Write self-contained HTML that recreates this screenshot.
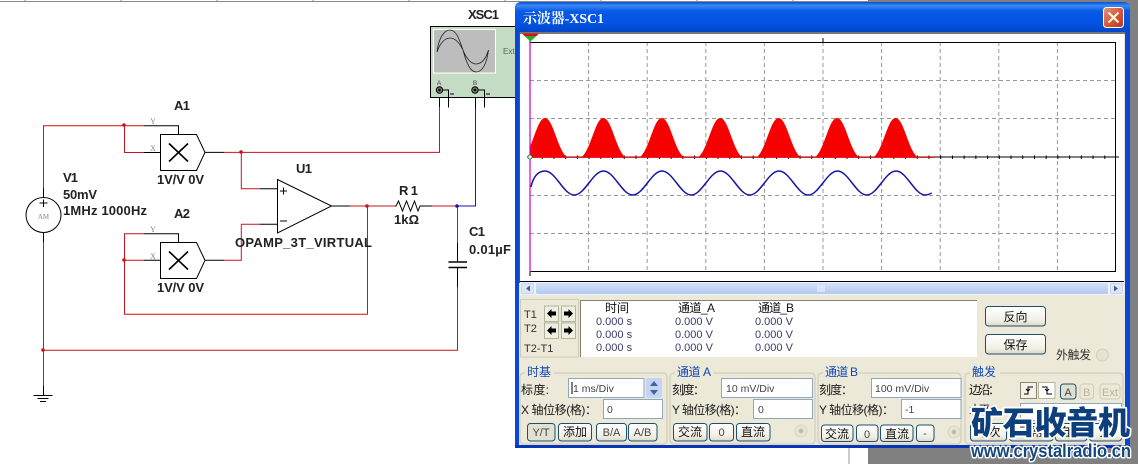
<!DOCTYPE html>
<html lang="zh">
<head>
<meta charset="utf-8">
<title>示波器-XSC1</title>
<style>
html,body{margin:0;padding:0;background:#fff;width:1138px;height:464px;overflow:hidden}
svg{display:block;position:absolute;left:0;top:0}
text{font-family:"Liberation Sans","Noto Sans CJK SC",sans-serif}
.l{font-size:13px;font-weight:bold;fill:#222}
.cj{font-size:12px;fill:#1a1a1a}
.gl{font-size:12px;fill:#1248b8}
.v{font-size:11px;fill:#3a3a6a}
.i{font-size:10.5px;fill:#444}
.h{font-size:12px;fill:#111}
.r{stroke:#c8141c;fill:none;stroke-width:1}
.k{stroke:#000;fill:none;stroke-width:1}
.btn{fill:url(#bt);stroke:#1f4f6f;stroke-width:1}
.inp{fill:#fff;stroke:#8fa6bc;stroke-width:1}
.grp{fill:none;stroke:#d5d2bf;stroke-width:1.5}
.gd{stroke:#999;stroke-width:1;stroke-dasharray:4 3;fill:none}
</style>
</head>
<body>
<svg width="1138" height="464" viewBox="0 0 1138 464" xmlns="http://www.w3.org/2000/svg">
<defs>
<linearGradient id="tb" x1="0" y1="0" x2="0" y2="1">
<stop offset="0" stop-color="#0a4fd0"/><stop offset=".12" stop-color="#3a8af5"/><stop offset=".3" stop-color="#0a5ae6"/><stop offset=".7" stop-color="#0353e4"/><stop offset="1" stop-color="#0347c8"/>
</linearGradient>
<linearGradient id="bt" x1="0" y1="0" x2="0" y2="1"><stop offset="0" stop-color="#fff"/><stop offset=".7" stop-color="#f2f0e6"/><stop offset="1" stop-color="#dcd9c8"/></linearGradient>
<linearGradient id="sb" x1="0" y1="0" x2="0" y2="1"><stop offset="0" stop-color="#d2e0fa"/><stop offset="1" stop-color="#b4caf2"/></linearGradient>
<linearGradient id="cl" x1="0" y1="0" x2="1" y2="1"><stop offset="0" stop-color="#e9967c"/><stop offset=".5" stop-color="#d9583a"/><stop offset="1" stop-color="#b8371c"/></linearGradient>
<clipPath id="pc"><rect x="530" y="42" width="585" height="230"/></clipPath>
</defs>

<rect width="1138" height="464" fill="#fff"/>
<!-- top ruler strip -->
<path d="M0 1.5H868" stroke="#8a8a8a" fill="none"/>
<path d="M25 0V2M121 0V2M217 0V2M313 0V2M409 0V2M505 0V2M601 0V2M697 0V2M793 0V2" stroke="#8a8a8a"/>
<!-- gray background right -->
<rect x="868" y="0" width="270" height="464" fill="#808080"/>
<path d="M849 448V464" stroke="#999"/>

<!-- schematic wires -->
<path class="r" d="M43.5 188V125.7H144M124.5 125.7V152.5H144M43.5 242V386M43.5 350.3H457.5V287M457.5 206V243"/>
<path class="k" d="M144 125.7H178.5V134M144 152.5H160.5M43.5 386V395M33.5 395.5H52.5M37.5 398.5H48.5M40 401.5H46M43.5 188V198M43.5 232V242"/>
<circle cx="43.5" cy="215" r="17.5" fill="#fff" stroke="#000"/>
<path d="M39.5 203H47.5M43.5 199.5V207" stroke="#000" fill="none"/>
<text x="43.5" y="219" text-anchor="middle" style="font-family:'Liberation Serif',serif;font-size:7px;fill:#888">AM</text>
<circle cx="124" cy="125" r="1.8" fill="#c8141c"/>
<text x="153" y="124" text-anchor="middle" style="font-family:'Liberation Serif',serif;font-size:8px;fill:#888">Y</text>
<text x="153" y="151" text-anchor="middle" style="font-family:'Liberation Serif',serif;font-size:8px;fill:#888">X</text>

<!-- A1 -->
<path class="k" d="M160.5 134.5H196.5L205 152.4L196.5 170.5H160.5Z" fill="#fff"/>
<path d="M169 143.5L188 161.5M188 143.5L169 161.5" stroke="#000" stroke-width="1.6" fill="none"/>
<path class="k" d="M205 152.4H224"/>
<path class="r" d="M224 152.4H439.5V107M241.3 152.4V188.7H260M241.3 224.3V260.3H224M241.3 224.3H260"/>
<path class="k" d="M439.5 107V90M260 188.7H277.5M260 224.3H277.5M205 260.3H224"/>
<circle cx="241" cy="152" r="1.8" fill="#c8141c"/>

<!-- A2 -->
<path class="r" d="M144 233.7H124.5V314.3H367.5V206M124.5 260.3H144"/>
<path class="k" d="M144 233.7H178.5V242M144 260.3H160.5"/>
<path class="k" d="M160.5 242.5H196.5L205 260.4L196.5 278.5H160.5Z" fill="#fff"/>
<path d="M169 251.5L188 269.5M188 251.5L169 269.5" stroke="#000" stroke-width="1.6" fill="none"/>
<circle cx="124" cy="260" r="1.8" fill="#c8141c"/>
<circle cx="43" cy="350" r="1.8" fill="#c8141c"/>
<text x="153" y="232" text-anchor="middle" style="font-family:'Liberation Serif',serif;font-size:8px;fill:#888">Y</text>
<text x="153" y="259" text-anchor="middle" style="font-family:'Liberation Serif',serif;font-size:8px;fill:#888">X</text>

<!-- opamp -->
<path class="k" d="M277.5 179.5L331.5 206L277.5 233Z" fill="#fff"/>
<path d="M280 191H287M283.5 187.5V194.5M280 221H287" stroke="#000" fill="none"/>
<path class="k" d="M331.5 206H350"/>
<path class="r" d="M350 206H395M432 206H457"/>
<circle cx="367" cy="206" r="1.8" fill="#c8141c"/>
<path class="k" d="M395 206H396L398.500 201L402.500 211L406.500 201L410.500 211L414.500 201L418 211L420 206H432"/>
<path d="M457 206H475.500V108" stroke="#1616a8" fill="none"/>
<path class="k" d="M475.500 108V90"/>
<circle cx="457" cy="206" r="1.800" fill="#1616a8"/>
<!-- capacitor -->
<path class="k" d="M457.500 243V261.500M457.500 267.500V287"/>
<path d="M448.500 262H467M448.500 267.500H467" stroke="#000" stroke-width="1.600" fill="none"/>

<!-- labels -->
<text class="l" x="468" y="19" textLength="31" lengthAdjust="spacing">XSC1</text>
<text class="l" x="174" y="110" textLength="16" lengthAdjust="spacing">A1</text>
<text class="l" x="63" y="182" textLength="15" lengthAdjust="spacing">V1</text>
<text class="l" x="63" y="199" textLength="34" lengthAdjust="spacing">50mV</text>
<text class="l" x="63" y="215" textLength="84" lengthAdjust="spacing">1MHz 1000Hz</text>
<text class="l" x="174" y="218" textLength="16" lengthAdjust="spacing">A2</text>
<text class="l" x="157" y="184" textLength="47" lengthAdjust="spacing">1V/V 0V</text>
<text class="l" x="157" y="292" textLength="47" lengthAdjust="spacing">1V/V 0V</text>
<text class="l" x="296" y="173" textLength="16" lengthAdjust="spacing">U1</text>
<text class="l" x="399" y="195" textLength="19" lengthAdjust="spacing">R1</text>
<text class="l" x="394" y="224" textLength="25" lengthAdjust="spacing">1kΩ</text>
<text class="l" x="469" y="236" textLength="16" lengthAdjust="spacing">C1</text>
<text class="l" x="469" y="254" textLength="42" lengthAdjust="spacing">0.01µF</text>
<text class="l" x="235" y="247" textLength="137" lengthAdjust="spacing">OPAMP_3T_VIRTUAL</text>

<!-- oscilloscope symbol -->
<rect x="430.500" y="26.500" width="90" height="71" fill="#c3dcc3" stroke="#000"/>
<rect x="433.500" y="29.500" width="62" height="43.500" fill="#bdbdbd" stroke="#fff"/>
<path d="M437 52C439 36 445 30 450 30C457 30 460 42 463 50C466 62 470 72 476 72C483 72 487 62 488.500 50M437 52C440 43 445 38 450 38C456 38 460 44 463 50C466 58 471 64 476 64C482 64 486 58 488.500 50" stroke="#222" stroke-width=".8" fill="none"/>
<text x="503" y="54" style="font-size:8px;fill:#556b55">Ext</text>
<text x="439" y="85" text-anchor="middle" style="font-size:6.500px;fill:#445">A</text>
<text x="475" y="85" text-anchor="middle" style="font-size:6.500px;fill:#445">B</text>
<circle cx="439.500" cy="90" r="3.200" fill="#777" stroke="#000"/>
<circle cx="475" cy="90" r="3.200" fill="#777" stroke="#000"/>
<circle cx="439.500" cy="90" r="1.200" fill="#000"/>
<circle cx="475" cy="90" r="1.200" fill="#000"/>
<path class="k" d="M442 90H448.500V107.500M478 90H484.500V107.500M450 94H454M486 94H490"/>

<!-- window frame -->
<path d="M515 448V8Q515 2 522 2H1122Q1130 2 1130 8V448Z" fill="#0a47d6"/>
<path d="M515 32V8Q515 2 522 2H1122Q1130 2 1130 8V32Z" fill="url(#tb)"/>
<rect x="515" y="445" width="615" height="3" fill="#0834b8"/>
<rect x="519" y="32" width="606" height="413" fill="#ece9d8"/>
<rect x="519" y="32" width="606" height="2" fill="#777"/>
<text x="523" y="23" textLength="81" lengthAdjust="spacing" style="font-family:'Liberation Serif','Noto Serif CJK SC',serif;font-size:14px;font-weight:bold;fill:#fff">示波器-XSC1</text>
<!-- close -->
<rect x="1103.500" y="7.500" width="20" height="20" rx="3" fill="url(#cl)" stroke="#fff"/>
<path d="M1108.500 12.500L1118.500 22.500M1118.500 12.500L1108.500 22.500" stroke="#fff6e0" stroke-width="2.200"/>

<!-- plot -->
<rect x="520" y="34" width="604" height="247" fill="#fff"/>
<path d="M519.500 32V283" stroke="#555"/>
<path d="M520 281.500H1124" stroke="#000"/>
<path class="gd" d="M588.600 42V271M647.200 42V271M705.800 42V271M764.400 42V271M823 42V271M881.600 42V271M940.200 42V271M998.800 42V271M1057.400 42V271M530 80.500H1115M530 118.500H1115M530 195.500H1115M530 233.500H1115"/>
<path d="M530 42.500H1115.500V271.500H530M823 38V42" stroke="#000" fill="none"/>
<path d="M527 157H1119" stroke="#000"/>
<path d="M530 157.200H1116" stroke="#000" stroke-width="3.500" stroke-dasharray="1 10.720" fill="none"/>
<g clip-path="url(#pc)">
<path d="M523.500 157C533 148 537 118 545 118C553 118 557 148 566.500 157ZM581.900 157C591.400 148 595.400 118 603.400 118C611.400 118 615.400 148 624.900 157ZM640.300 157C649.800 148 653.800 118 661.800 118C669.800 118 673.800 148 683.300 157ZM698.700 157C708.200 148 712.200 118 720.200 118C728.200 118 732.200 148 741.700 157ZM757.100 157C766.600 148 770.600 118 778.600 118C786.600 118 790.600 148 800.100 157ZM815.500 157C825 148 829 118 837 118C845 118 849 148 858.500 157ZM874.100 157C883.600 148 887.600 118 895.600 118C903.600 118 907.600 148 917.100 157Z" fill="#f60000"/>
<path d="M530 157.300H935" stroke="#e8000c" stroke-width="1.200"/>
</g>
<path d="M531 187C533 177 538 171 545 171c10.650 0 18.600 24 29.250 24s18.600-24 29.250-24s18.600 24 29.250 24s18.600-24 29.250-24s18.600 24 29.250 24s18.600-24 29.250-24s18.600 24 29.250 24s18.600-24 29.250-24s18.600 24 29.250 24s18.600-24 29.250-24s18.600 24 29.250 24s18.600-24 29.250-24s18.600 24 29.250 24c2.500 0 4.500-1 6.500-2" stroke="#1414a6" stroke-width="1.500" fill="none"/>
<path d="M530 34V272" stroke="#d000c8" stroke-width="1.200"/>
<path d="M530 272V276" stroke="#000"/>
<circle cx="530" cy="157" r="2" fill="#fff" stroke="#2a8a2a"/>
<path d="M522 33.500H539L536.500 36H524.500Z" fill="#dd1111"/>
<path d="M524.500 36H536.500L530.500 41.500Z" fill="#22b22a"/>

<!-- scrollbar -->
<rect x="520" y="282" width="604" height="13" fill="#eef2fb"/>
<rect x="521.500" y="283.500" width="12" height="10" rx="1.500" fill="#dce6f8" stroke="#c6d4ee"/>
<path d="M526 288.500L530 285.500V291.500Z" fill="#44608e"/>
<rect x="536" y="283" width="572" height="11" rx="1.500" fill="url(#sb)"/>
<path d="M818 285V292M820 285V292M822 285V292M824 285V292" stroke="#f2f6ff"/>
<rect x="1110.500" y="283.500" width="12" height="10" rx="1.500" fill="#dce6f8" stroke="#c6d4ee"/>
<path d="M1118 288.500L1114 285.500V291.500Z" fill="#44608e"/>

<!-- cursors panel -->
<rect x="520.500" y="299.500" width="58" height="57.500" fill="none" stroke="#cfcbb4"/>
<text class="h" x="524" y="318" style="font-size:11px;fill:#333">T1</text>
<text class="h" x="524" y="332" style="font-size:11px;fill:#333">T2</text>
<text class="h" x="524" y="352" style="font-size:11px;fill:#333">T2-T1</text>
<g fill="#f1efe2" stroke="#b5b29e">
<rect x="544.500" y="306" width="14" height="15.500"/><rect x="561.500" y="306" width="14" height="15.500"/>
<rect x="544.500" y="323" width="14" height="15.500"/><rect x="561.500" y="323" width="14" height="15.500"/>
</g>
<g fill="#000">
<path d="M547 313.500L551.500 309V311.500H556V315.500H551.500V318Z"/>
<path d="M573 313.500L568.500 309V311.500H564V315.500H568.500V318Z"/>
<path d="M547 330.500L551.500 326V328.500H556V332.500H551.500V335Z"/>
<path d="M573 330.500L568.500 326V328.500H564V332.500H568.500V335Z"/>
</g>
<rect x="580" y="300" width="397" height="57" fill="#fff"/>
<path d="M580.500 357V300.500H977" stroke="#85816a" fill="none"/>
<text class="h" x="605" y="312">时间</text>
<text class="h" x="678" y="312" textLength="37" lengthAdjust="spacing">通道_A</text>
<text class="h" x="758" y="312" textLength="36" lengthAdjust="spacing">通道_B</text>
<g class="v">
<text class="v" x="596" y="325">0.000 s</text><text class="v" x="596" y="338">0.000 s</text><text class="v" x="596" y="351">0.000 s</text>
<text class="v" x="675" y="325">0.000 V</text><text class="v" x="675" y="338">0.000 V</text><text class="v" x="675" y="351">0.000 V</text>
<text class="v" x="755" y="325">0.000 V</text><text class="v" x="755" y="338">0.000 V</text><text class="v" x="755" y="351">0.000 V</text>
</g>

<!-- right buttons -->
<rect class="btn" x="985.500" y="306.500" width="60" height="19.500" rx="3"/>
<text class="h" x="1015.500" y="321" text-anchor="middle">反向</text>
<rect class="btn" x="985.500" y="334.500" width="60" height="19.500" rx="3"/>
<text class="h" x="1015.500" y="349" text-anchor="middle">保存</text>
<text class="h" x="1056" y="359" textLength="35" lengthAdjust="spacing" style="fill:#333">外触发</text>
<circle cx="1102.500" cy="355" r="6" fill="#e6e3d2" stroke="#d2cfbc"/>

<!-- group boxes -->
<rect class="grp" x="520" y="373" width="147" height="71" rx="4"/>
<rect class="grp" x="670" y="373" width="145" height="71" rx="4"/>
<rect class="grp" x="818" y="373" width="143" height="71" rx="4"/>
<rect class="grp" x="965" y="373" width="158" height="71" rx="4"/>
<rect x="525" y="365" width="29" height="14" fill="#ece9d8"/>
<rect x="675" y="365" width="38" height="14" fill="#ece9d8"/>
<rect x="823" y="365" width="36" height="14" fill="#ece9d8"/>
<rect x="970" y="365" width="30" height="14" fill="#ece9d8"/>
<text class="gl" x="527" y="376">时基</text>
<text class="gl" x="677" y="376" textLength="34" lengthAdjust="spacing">通道 A</text>
<text class="gl" x="825" y="376" textLength="33" lengthAdjust="spacing">通道 B</text>
<text class="gl" x="972" y="376">触发</text>

<!-- timebase -->
<text class="cj" x="521" y="394" textLength="28" lengthAdjust="spacing">标度:</text>
<rect class="inp" x="568.500" y="378.500" width="75.500" height="19"/>
<path d="M572 382V394" stroke="#000"/>
<text class="i" x="573" y="392">1 ms/Div</text>
<rect x="646" y="378" width="16" height="20" rx="2" fill="#c4d4f6"/>
<path d="M654 381L650 386H658ZM654 395L650 390H658Z" fill="#4a628e"/>
<text class="cj" x="521" y="414" textLength="76" lengthAdjust="spacing">X 轴位移(格)：</text>
<rect class="inp" x="603.500" y="399.500" width="59" height="19"/>
<text class="i" x="607" y="413">0</text>
<rect x="527.500" y="423.500" width="27.500" height="17.500" rx="3" fill="#e2e0d0" stroke="#1f4f6f"/>
<text class="i" x="541" y="436" text-anchor="middle" style="font-size:11px">Y/T</text>
<rect class="btn" x="558.500" y="423.500" width="33" height="17.500" rx="3"/>
<text class="h" x="575" y="436" text-anchor="middle">添加</text>
<rect class="btn" x="596.500" y="423.500" width="30" height="17.500" rx="3"/>
<text class="i" x="611.500" y="436" text-anchor="middle" style="font-size:11px">B/A</text>
<rect class="btn" x="628.500" y="423.500" width="28.500" height="17.500" rx="3"/>
<text class="i" x="642.500" y="436" text-anchor="middle" style="font-size:11px">A/B</text>

<!-- channel A -->
<text class="cj" x="672" y="394" textLength="33" lengthAdjust="spacing">刻度：</text>
<rect class="inp" x="721.500" y="378.500" width="91" height="19"/>
<text class="i" x="726" y="392">10 mV/Div</text>
<text class="cj" x="672" y="414" textLength="74" lengthAdjust="spacing">Y 轴位移(格)：</text>
<rect class="inp" x="753.500" y="399.500" width="59" height="19"/>
<text class="i" x="758" y="413">0</text>
<rect class="btn" x="673.500" y="423.500" width="33.500" height="17.500" rx="3"/>
<text class="h" x="690" y="436" text-anchor="middle">交流</text>
<rect class="btn" x="709.500" y="423.500" width="24" height="17.500" rx="3"/>
<text class="i" x="721.500" y="436" text-anchor="middle" style="font-size:11px">0</text>
<rect class="btn" x="736.500" y="423.500" width="33.500" height="17.500" rx="3"/>
<text class="h" x="753" y="436" text-anchor="middle">直流</text>
<circle cx="801" cy="431" r="6" fill="#e6e3d2" stroke="#d8d5c2"/><circle cx="801" cy="431" r="2.200" fill="#bdbaa6"/>

<!-- channel B -->
<text class="cj" x="819" y="394" textLength="34" lengthAdjust="spacing">刻度：</text>
<rect class="inp" x="871.500" y="378.500" width="89.500" height="19"/>
<text class="i" x="875" y="392">100 mV/Div</text>
<text class="cj" x="819" y="414" textLength="75" lengthAdjust="spacing">Y 轴位移(格)：</text>
<rect class="inp" x="901.500" y="399.500" width="59.500" height="19"/>
<text class="i" x="905" y="413">-1</text>
<rect class="btn" x="821.500" y="425" width="31.500" height="16.500" rx="3"/>
<text class="h" x="837" y="438" text-anchor="middle">交流</text>
<rect class="btn" x="856.500" y="425" width="21.500" height="16.500" rx="3"/>
<text class="i" x="867" y="438" text-anchor="middle" style="font-size:11px">0</text>
<rect class="btn" x="880.500" y="425" width="32.500" height="16.500" rx="3"/>
<text class="h" x="897" y="438" text-anchor="middle">直流</text>
<rect class="btn" x="916.500" y="425" width="17.500" height="16.500" rx="3"/>
<text class="i" x="925" y="437" text-anchor="middle" style="font-size:11px">-</text>
<circle cx="954" cy="432" r="6" fill="#e6e3d2" stroke="#d8d5c2"/><circle cx="954" cy="432" r="2.200" fill="#bdbaa6"/>

<!-- trigger -->
<text class="cj" x="969" y="394" textLength="31" lengthAdjust="spacing">边沿：</text>
<rect x="1020.500" y="382.500" width="16" height="16" fill="#f4f2e8" stroke="#8a8672"/>
<path d="M1024 394H1028V387H1033M1028 391L1026 389M1028 391L1030 389" stroke="#000" fill="none"/>
<rect x="1038.500" y="382.500" width="16.500" height="16" fill="#fff" stroke="#b6b29c"/>
<path d="M1042 387H1047V394H1052M1047 391L1045 389M1047 391L1049 389" stroke="#000" fill="none"/>
<rect x="1060.500" y="384" width="15.500" height="15" rx="3" fill="#e0dfd0" stroke="#1f4f6f"/>
<text class="i" x="1068" y="396" text-anchor="middle" style="font-size:11px">A</text>
<rect x="1080" y="384" width="13.500" height="15" rx="3" fill="#ece9d8" stroke="#cfccb8"/>
<text x="1086.700" y="396" text-anchor="middle" style="font-size:11px;fill:#b5b29e">B</text>
<rect x="1100" y="384" width="20" height="15" rx="3" fill="#ece9d8" stroke="#cfccb8"/>
<text x="1110" y="396" text-anchor="middle" style="font-size:11px;fill:#b5b29e">Ext</text>
<text class="cj" x="969" y="414" textLength="31" lengthAdjust="spacing">水平：</text>
<rect class="inp" x="1020.500" y="403.500" width="101" height="17"/>
<rect class="btn" x="970.500" y="423.500" width="36" height="17.500" rx="3"/>
<text class="h" x="988.500" y="436" text-anchor="middle">单次</text>
<rect class="btn" x="1009.500" y="423.500" width="43.500" height="17.500" rx="3"/>
<text class="h" x="1031" y="436" text-anchor="middle">正常</text>
<rect class="btn" x="1055.500" y="423.500" width="31.500" height="17.500" rx="3"/>
<text class="h" x="1071" y="436" text-anchor="middle">自动</text>
<rect class="btn" x="1089.500" y="423.500" width="32" height="17.500" rx="3"/>
<text class="h" x="1105.500" y="436" text-anchor="middle">无</text>

<!-- watermark -->
<text x="971" y="434" textLength="159" lengthAdjust="spacing" style="font-family:'Noto Sans CJK SC','WenQuanYi Zen Hei',sans-serif;font-size:32px;font-weight:900;fill:#0c3f7c;stroke:#fff;stroke-width:3.500px;paint-order:stroke;stroke-linejoin:round">矿石收音机</text>
<text x="971" y="457" textLength="160" lengthAdjust="spacingAndGlyphs" style="font-size:18.5px;font-weight:bold;fill:#15477f;stroke:#fff;stroke-width:3px;paint-order:stroke;stroke-linejoin:round">www.crystalradio.cn</text>
</svg>
</body>
</html>
